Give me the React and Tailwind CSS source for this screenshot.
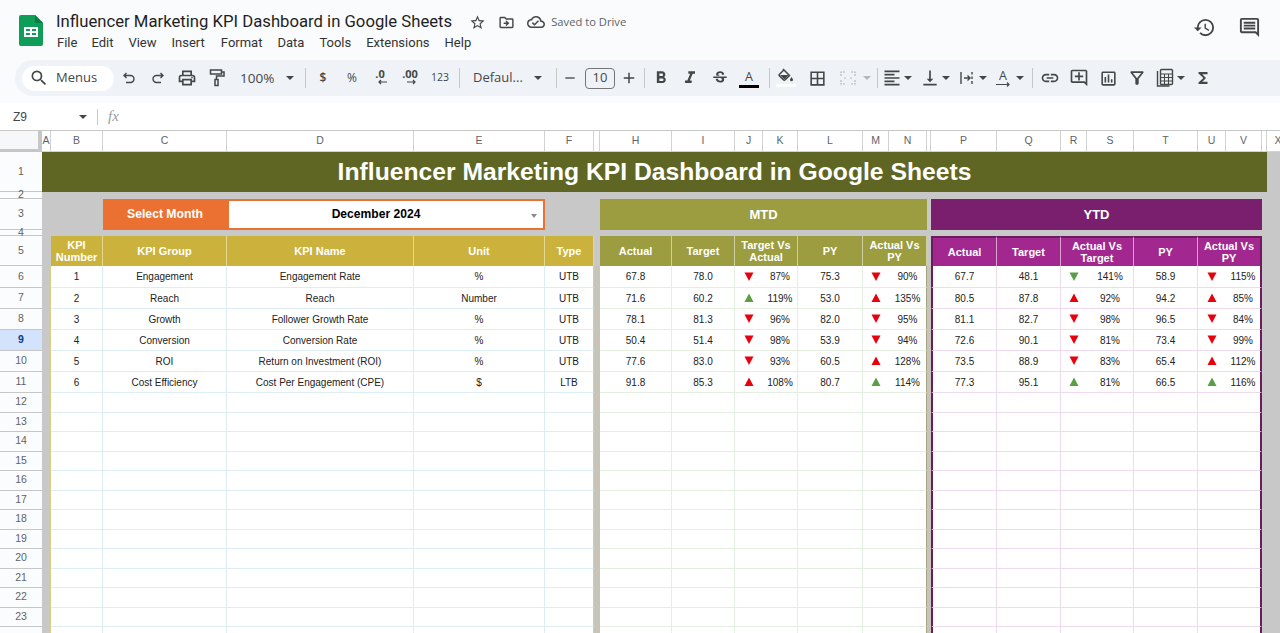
import React from "react";
import {
  MdSearch, MdOutlinePrint, MdFormatBold, MdFormatItalic, MdStrikethroughS,
  MdBorderAll, MdFormatAlignLeft, MdVerticalAlignBottom, MdLink, MdOutlineAddComment,
  MdOutlineAssessment, MdOutlineFilterAlt, MdFunctions, MdHistory, MdOutlineComment, MdStarBorder,
  MdOutlineDriveFileMove, MdOutlineCloudDone, MdAdd, MdRemove,
} from "react-icons/md";

const Dd = ({ className = "" }) => (
  <span className={"w-[10px] flex justify-center shrink-0 " + className}>
    <span className="w-0 h-0 border-x-[4px] border-t-[4px] border-x-transparent border-t-[#444746]" />
  </span>
);
const Sep = ({ className = "" }) => <span className={"w-px h-[20px] bg-[#c7c7c7] shrink-0 " + className} />;
const Ic = ({ className = "", children }) => (
  <span className={"w-5 h-5 flex items-center justify-center shrink-0 text-[#444746] " + className}>{children}</span>
);
const Tx = ({ className = "", children }) => (
  <span className={"shrink-0 text-[#444746] whitespace-nowrap " + className}>{children}</span>
);

function Logo() {
  return (
    <svg width="24" height="31" viewBox="0 0 24 31" className="shrink-0">
      <path d="M2 0h14l8 8v21a2 2 0 0 1-2 2H2a2 2 0 0 1-2-2V2a2 2 0 0 1 2-2z" fill="#0f9d58" />
      <path d="M16 0l8 8h-6a2 2 0 0 1-2-2z" fill="#0a7d45" />
      <path d="M5 12h14v10H5z M7 14v2h4v-2z M13 14v2h4v-2z M7 18v2h4v-2z M13 18v2h4v-2z" fill="#fff" fillRule="evenodd" />
    </svg>
  );
}

function Toolbar() {
  return (
    <div className="ml-[15px] h-[36px] bg-[#eff3f8] rounded-l-[18px] flex items-center pl-[7px] text-[13px]">
      <div className="w-[92px] h-[25px] bg-white rounded-full flex items-center pl-[7px] shrink-0">
        <MdSearch size={20} className="text-[#444746]" />
        <span className="ml-[7px] text-[#444746] text-[13px]">Menus</span>
      </div>
      <Ic className="ml-[5px]">
        <svg width="16" height="16" viewBox="0 0 16 16" fill="none" stroke="#444746" strokeWidth="1.4">
          <path d="M5.5 3 3 5.5 5.5 8M3 5.5h6.5a3.5 3.5 0 0 1 0 7H5" />
        </svg>
      </Ic>
      <Ic className="ml-[9px]">
        <svg width="16" height="16" viewBox="0 0 16 16" fill="none" stroke="#444746" strokeWidth="1.4">
          <path d="M10.5 3 13 5.5 10.5 8M13 5.5H6.5a3.5 3.5 0 0 0 0 7H11" />
        </svg>
      </Ic>
      <Ic className="ml-[9px]"><MdOutlinePrint size={20} /></Ic>
      <Ic className="ml-[10px]">
        <svg width="18" height="20" viewBox="0 0 18 20" fill="none" stroke="#444746" strokeWidth="1.5">
          <path d="M2.5 2h11v4h-11z M13.5 4h2.5v4H8.5v3.5 M7 11.5h3v6H7z" />
        </svg>
      </Ic>
      <Tx className="ml-[13px] w-[33px] text-[13.5px]">100%</Tx>
      <Dd className="ml-[12px]" />
      <Sep className="ml-[10px]" />
      <Tx className="ml-[7px] w-5 text-center text-[12px] font-semibold">$</Tx>
      <Tx className="ml-[9px] w-5 text-center text-[12px]">%</Tx>
      <span className="ml-[8px] w-5 shrink-0 flex flex-col items-center text-[#444746] leading-none">
        <span className="text-[11px] font-bold h-[11px] -mt-[3px]">.0</span>
        <svg width="10" height="6" viewBox="0 0 10 6" className="ml-[4px]"><path d="M10 3H2M4 1 2 3l2 2" fill="none" stroke="#444746" strokeWidth="1.2" /></svg>
      </span>
      <span className="ml-[10px] w-5 shrink-0 flex flex-col items-center text-[#444746] leading-none">
        <span className="text-[11px] font-bold h-[11px] -mt-[3px]">.00</span>
        <svg width="10" height="6" viewBox="0 0 10 6" className="ml-[4px]"><path d="M0 3h8M6 1l2 2-2 2" fill="none" stroke="#444746" strokeWidth="1.2" /></svg>
      </span>
      <Tx className="ml-[10px] w-5 text-center text-[10.5px]">123</Tx>
      <Sep className="ml-[9px]" />
      <Tx className="ml-[13px] w-[51px] text-[13px]">Defaul...</Tx>
      <Dd className="ml-[9px]" />
      <Sep className="ml-[13px]" />
      <Ic className="ml-[3px]"><MdRemove size={16} /></Ic>
      <span className="ml-[5px] w-[30px] h-[21px] border border-[#747775] rounded-[4px] flex items-center justify-center text-[13px] text-[#444746] shrink-0">10</span>
      <Ic className="ml-[4px]"><MdAdd size={18} /></Ic>
      <Sep className="ml-[5px]" />
      <Ic className="ml-[6px]"><MdFormatBold size={20} /></Ic>
      <Ic className="ml-[9px]"><MdFormatItalic size={20} /></Ic>
      <Ic className="ml-[10px]"><MdStrikethroughS size={18} /></Ic>
      <span className="ml-[9px] w-5 shrink-0 flex flex-col items-center">
        <span className="text-[12.5px] leading-[15px] text-[#444746]">A</span>
        <span className="w-5 h-[3px] bg-black mt-[1px]" />
      </span>
      <Sep className="ml-[10px]" />
      <span className="ml-[6px] w-5 shrink-0 flex flex-col items-center">
        <svg width="16" height="14" viewBox="0 0 16 14" className="-mt-[2px]">
          <path d="M5 1l6.5 6.5-4.3 4.3a1.3 1.3 0 0 1-1.8 0L1.5 8a1.3 1.3 0 0 1 0-1.8L5.6 2.2" fill="none" stroke="#444746" strokeWidth="1.5" />
          <path d="M2 7h8.6L7 11 5.8 11z" fill="#444746" />
          <path d="M13.5 9c1 1.4 1.5 2.1 1.5 2.8a1.5 1.5 0 0 1-3 0c0-.7.5-1.4 1.5-2.8z" fill="#444746" />
        </svg>
        <span className="w-5 h-[3px] bg-white mt-[2px]" />
      </span>
      <Ic className="ml-[11px]"><MdBorderAll size={19} /></Ic>
      <Ic className="ml-[11px]">
        <svg width="18" height="18" viewBox="0 0 18 18" fill="none" stroke="#b5b8bb" strokeWidth="1.2">
          <path d="M2 7V3h4M2 11v4h4M16 7V3h-4M16 11v4h-4M7 9h-3M11 9h3" strokeDasharray="2 1" />
        </svg>
      </Ic>
      <span className="ml-[4px] w-[10px] flex justify-center shrink-0"><span className="w-0 h-0 border-x-[4px] border-t-[4px] border-x-transparent border-t-[#b5b8bb]" /></span>
      <Sep className="ml-[5px]" />
      <Ic className="ml-[4px]"><MdFormatAlignLeft size={20} /></Ic>
      <Dd className="ml-[1px]" />
      <Ic className="ml-[7px]"><MdVerticalAlignBottom size={20} /></Ic>
      <Dd className="ml-[1px]" />
      <Ic className="ml-[6px]">
        <svg width="16" height="16" viewBox="0 0 16 16" fill="none" stroke="#444746" strokeWidth="1.4">
          <path d="M2 2v12M13 2v2.5M13 6.5V9M13 11v3M5 8h6M8.5 5.5 11 8l-2.5 2.5" />
        </svg>
      </Ic>
      <Dd className="ml-[1px]" />
      <span className="ml-[5px] w-5 shrink-0 flex flex-col items-center">
        <span className="text-[12.5px] leading-[13px] text-[#444746]">A</span>
        <svg width="15" height="5" viewBox="0 0 15 5"><path d="M0 2.5h13M11 .5l2 2-2 2" fill="none" stroke="#444746" strokeWidth="1.2" /></svg>
      </span>
      <Dd className="ml-[2px]" />
      <Sep className="ml-[7px]" />
      <Ic className="ml-[7px]"><MdLink size={20} /></Ic>
      <Ic className="ml-[9px]"><MdOutlineAddComment size={20} /></Ic>
      <Ic className="ml-[9px]"><MdOutlineAssessment size={19} /></Ic>
      <Ic className="ml-[9px]"><MdOutlineFilterAlt size={20} /></Ic>
      <Ic className="ml-[8px]">
        <svg width="18" height="20" viewBox="0 0 18 20" fill="none" stroke="#444746" strokeWidth="1.4">
          <path d="M1.5 3v15h12" />
          <rect x="4.5" y="1.5" width="12" height="15" rx="1" />
          <path d="M4.5 6h12M8.5 6v10M12.5 6v10M4.5 9.5h12M4.5 13h12" strokeWidth="1.1" />
        </svg>
      </Ic>
      <Dd className="ml-[1px]" />
      <Ic className="ml-[7px]"><MdFunctions size={18} /></Ic>
    </div>
  );
}

const COLS = "grid grid-cols-[42px_9px_52px_124px_187px_131px_49px_6px_72px_63px_28px_35px_65px_26px_38px_4px_66px_64px_26px_47px_64px_28px_36px_5px_23px]";
const ROWS = "grid-rows-[21px_40px_7px_31px_6px_30px_22px_21px_21px_21px_21px_21px_repeat(13,19.5px)]";

const letters = ["A", "B", "C", "D", "E", "F", "", "H", "I", "J", "K", "L", "M", "N", "", "P", "Q", "R", "S", "T", "U", "V", "", "X"];

const GRAY = "bg-[#c8c8c8]";
const RowNo = ({ n, active }) => (
  <div className={"flex items-center justify-center text-[10.5px] border-b border-[#c7c7c7] " + (active ? "bg-[#d3e3fd] text-[#0b3a82] font-bold" : "bg-[#fbfcfd] text-[#5f6368]")}>
    {n}
  </div>
);

const KH = "bg-[#cbb23c] text-white font-bold text-[11px] leading-[12px] flex items-center justify-center text-center border-r border-[#e4d78f]";
const MH = "bg-[#9c9c40] text-white font-bold text-[11px] leading-[12px] flex items-center justify-center text-center border-r border-[#cfcf9f]";
const YH = "bg-[#a2288f] text-white font-bold text-[11px] leading-[12px] flex items-center justify-center text-center border-r border-[#d9a0d0] border-t-2 border-t-[#6e1a5e]";

const KC = "bg-white border-b border-r border-[#dcedf3] text-[#222] text-[10px] flex items-center justify-center whitespace-nowrap";
const MC = "bg-white border-b border-r border-[#e4efe0] text-[#222] text-[10px] flex items-center justify-center whitespace-nowrap";
const YC = "bg-white border-b border-r border-[#f0daf0] text-[#222] text-[10px] flex items-center justify-center whitespace-nowrap";

const Arrow = ({ dir, color }) => (
  <svg width="10" height="10" viewBox="0 0 10 10">
    <polygon points={dir === "u" ? "5,0.5 9.5,9 0.5,9" : "0.5,0.5 9.5,0.5 5,9"} fill={color === "g" ? "#5a9e45" : "#e8000d"} />
  </svg>
);

const data = [
  [1, "Engagement", "Engagement Rate", "%", "UTB", "67.8", "78.0", "d", "r", "87%", "75.3", "d", "r", "90%", "67.7", "48.1", "d", "g", "141%", "58.9", "d", "r", "115%"],
  [2, "Reach", "Reach", "Number", "UTB", "71.6", "60.2", "u", "g", "119%", "53.0", "u", "r", "135%", "80.5", "87.8", "u", "r", "92%", "94.2", "u", "r", "85%"],
  [3, "Growth", "Follower Growth Rate", "%", "UTB", "78.1", "81.3", "d", "r", "96%", "82.0", "d", "r", "95%", "81.1", "82.7", "d", "r", "98%", "96.5", "d", "r", "84%"],
  [4, "Conversion", "Conversion Rate", "%", "UTB", "50.4", "51.4", "d", "r", "98%", "53.9", "d", "r", "94%", "72.6", "90.1", "d", "r", "81%", "73.4", "d", "r", "99%"],
  [5, "ROI", "Return on Investment (ROI)", "%", "UTB", "77.6", "83.0", "d", "r", "93%", "60.5", "u", "r", "128%", "73.5", "88.9", "d", "r", "83%", "65.4", "u", "r", "112%"],
  [6, "Cost Efficiency", "Cost Per Engagement (CPE)", "$", "LTB", "91.8", "85.3", "u", "r", "108%", "80.7", "u", "g", "114%", "77.3", "95.1", "u", "g", "81%", "66.5", "u", "g", "116%"],
];

function DataRow({ n, d }) {
  const e = d || Array(23).fill("");
  const has = !!d;
  const A = ({ i, cls }) => <div className={cls}>{has && <Arrow dir={e[i]} color={e[i + 1]} />}</div>;
  return (
    <>
      <RowNo n={n} active={n === 9} />
      <div className={GRAY + " border-r border-[#d9cf85]"} />
      <div className={KC}>{e[0]}</div>
      <div className={KC}>{e[1]}</div>
      <div className={KC}>{e[2]}</div>
      <div className={KC}>{e[3]}</div>
      <div className={KC + " border-r-[#d9cf85]"}>{e[4]}</div>
      <div className="bg-[#c6c5b8]" />
      <div className={MC}>{e[5]}</div>
      <div className={MC}>{e[6]}</div>
      <A i={7} cls={MC + " border-r-0"} />
      <div className={MC}>{e[9]}</div>
      <div className={MC}>{e[10]}</div>
      <A i={11} cls={MC + " border-r-0"} />
      <div className={MC + " border-r-[#a3a383]"}>{e[13]}</div>
      <div className="bg-[#c6c5b8]" />
      <div className={YC + " border-l-2 border-l-[#6e1a5e]"}>{e[14]}</div>
      <div className={YC}>{e[15]}</div>
      <A i={16} cls={YC + " border-r-0"} />
      <div className={YC}>{e[18]}</div>
      <div className={YC}>{e[19]}</div>
      <A i={20} cls={YC + " border-r-0"} />
      <div className={YC + " border-r-2 border-r-[#6e1a5e]"}>{e[22]}</div>
      <div className={GRAY + " col-span-2"} />
    </>
  );
}

function Sheet() {
  return (
    <div className={COLS + " " + ROWS + " w-[1280px] overflow-hidden font-['Liberation_Sans',sans-serif]"}>
      {/* column letters */}
      <div className="bg-[#f6f7f8] border-r-[4px] border-b-[3px] border-[#c4c7c5]" />
      {letters.map((l, i) => (
        <div key={i} className="bg-white border-r border-b border-[#d0d2d4] flex items-center justify-center text-[10.5px] text-[#5f6368] overflow-hidden">{l}</div>
      ))}

      {/* row 1 */}
      <RowNo n={1} />
      <div className="col-span-23 bg-[#5f6623] text-white font-bold text-[24.7px] flex items-center justify-center">Influencer Marketing KPI Dashboard in Google Sheets</div>
      <div className={GRAY} />

      {/* row 2 */}
      <RowNo n={2} />
      <div className={GRAY + " col-span-24"} />

      {/* row 3 */}
      <RowNo n={3} />
      <div className={GRAY + " col-span-2"} />
      <div className="bg-[#ea7132] text-white font-bold text-[12.2px] flex items-center justify-center">Select Month</div>
      <div className="col-span-2 bg-white border-2 border-[#ea7132] flex items-center relative text-[12.1px] font-bold text-black pr-[20px]">
        <span className="flex-1 text-center">December 2024</span>
        <span className="absolute right-[6px] top-[13px] w-0 h-0 border-x-[3.5px] border-t-[4px] border-x-transparent border-t-[#8a8a8a]" />
      </div>
      <div className={GRAY + " col-span-2"} />
      <div className="col-span-7 bg-[#9c9c40] text-white font-bold text-[13px] flex items-center justify-center">MTD</div>
      <div className={GRAY} />
      <div className="col-span-7 bg-[#7a1f6e] text-white font-bold text-[13px] flex items-center justify-center">YTD</div>
      <div className={GRAY + " col-span-2"} />

      {/* row 4 */}
      <RowNo n={4} />
      <div className={GRAY + " col-span-24"} />

      {/* row 5 */}
      <RowNo n={5} />
      <div className={GRAY} />
      <div className={KH}>KPI<br />Number</div>
      <div className={KH}>KPI Group</div>
      <div className={KH}>KPI Name</div>
      <div className={KH}>Unit</div>
      <div className={KH}>Type</div>
      <div className={GRAY} />
      <div className={MH}>Actual</div>
      <div className={MH}>Target</div>
      <div className={MH + " col-span-2"}>Target Vs<br />Actual</div>
      <div className={MH}>PY</div>
      <div className={MH + " col-span-2"}>Actual Vs<br />PY</div>
      <div className={GRAY} />
      <div className={YH + " border-l-2 border-l-[#6e1a5e]"}>Actual</div>
      <div className={YH}>Target</div>
      <div className={YH + " col-span-2"}>Actual Vs<br />Target</div>
      <div className={YH}>PY</div>
      <div className={YH + " col-span-2 border-r-2 border-r-[#6e1a5e]"}>Actual Vs<br />PY</div>
      <div className={GRAY + " col-span-2"} />

      {Array.from({ length: 19 }, (_, i) => (
        <DataRow key={i} n={i + 6 <= 23 ? i + 6 : ""} d={data[i]} />
      ))}
    </div>
  );
}

export default function App() {
  return (
    <div className="w-[1280px] h-[633px] overflow-hidden bg-[#f9fbfd] font-['Open_Sans',sans-serif]">
      <div className="h-[60px] relative flex pt-[15px] pl-[19px]">
        <Logo />
        <div className="ml-[13px] -mt-[4px]">
          <div className="flex items-center h-[22px]">
            <span className="text-[16.7px] text-[#1f1f1f] whitespace-nowrap font-['Roboto',sans-serif]">Influencer Marketing KPI Dashboard in Google Sheets</span>
            <MdStarBorder size={17} className="ml-[17px] text-[#444746]" />
            <MdOutlineDriveFileMove size={17} className="ml-[12px] text-[#444746]" />
            <MdOutlineCloudDone size={18} className="ml-[12px] text-[#444746]" />
            <span className="ml-[6px] text-[11.2px] text-[#5f6368] whitespace-nowrap">Saved to Drive</span>
          </div>
          <div className="flex items-center h-[20px] text-[13px] text-[#333] font-['Roboto',sans-serif]">
            <span className="ml-[1px]">File</span>
            <span className="ml-[14px]">Edit</span>
            <span className="ml-[15px]">View</span>
            <span className="ml-[15px]">Insert</span>
            <span className="ml-[16px]">Format</span>
            <span className="ml-[15px]">Data</span>
            <span className="ml-[15px]">Tools</span>
            <span className="ml-[15px]">Extensions</span>
            <span className="ml-[15px]">Help</span>
          </div>
        </div>
        <MdHistory size={23} className="absolute left-[1193px] top-[16px] text-[#444746]" />
        <MdOutlineComment size={23} className="absolute left-[1238px] top-[16px] text-[#444746]" />
      </div>
      <Toolbar />
      <div className="mt-[7px] h-[28px] bg-white border-b border-[#c7c7c7] flex items-center text-[#444746]">
        <span className="ml-[13px] w-[65px] text-[12px] font-['Liberation_Sans',sans-serif]">Z9</span>
        <Dd />
        <span className="ml-[9px] w-px h-[16px] bg-[#c7c7c7]" />
        <span className="ml-[10px] text-[15px] italic text-[#9a9c9e] font-['Liberation_Serif',serif]">fx</span>
      </div>
      <Sheet />
    </div>
  );
}
